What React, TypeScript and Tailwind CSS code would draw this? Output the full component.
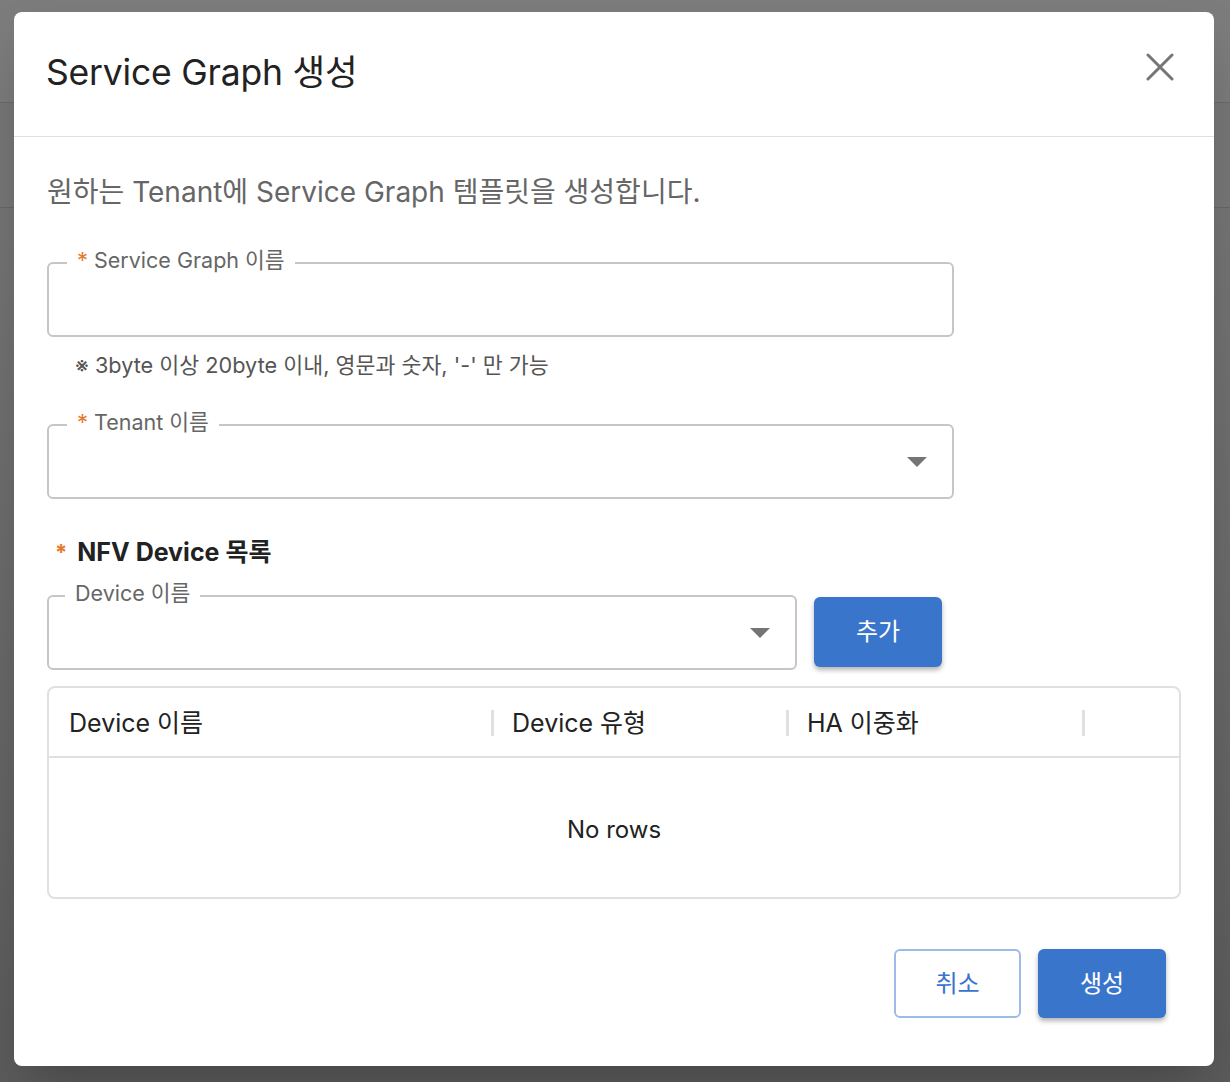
import React from 'react';

const font = { fontFamily: 'Inter, "Noto Sans CJK KR", sans-serif' };

const Caret: React.FC = () => (
    <svg width="20" height="10" viewBox="0 0 20 10" className="shrink-0">
        <path d="M0 0 L20 0 L10 10 Z" fill="#757575" />
    </svg>
);

const OutlinedField: React.FC<{ label: string; required?: boolean; select?: boolean; className?: string }> = ({ label, required, select, className }) => (
    <div className={`relative h-[75px] rounded-[6px] border-2 border-[#c6c6c6] flex items-center justify-end pr-[25px] ${className ?? ''}`}>
        <span className={`absolute -top-[18px] bg-white px-[10px] text-[21.5px] leading-[28px] text-[#666] flex items-center gap-[6px] ${required ? 'left-[18px]' : 'left-[16px]'}`}>
            {required && <span className="text-[#e37a2d] text-[22px]">*</span>}
            {label}
        </span>
        {select && <Caret />}
    </div>
);

export default function App() {
    return (
        <div className="relative w-[1230px] h-[1082px] overflow-hidden" style={font}>
            {/* dimmed page behind the dialog */}
            <div className="flex flex-col h-full bg-gradient-to-b from-[#7b7b7b] via-[#6c6c6c] to-[#5b5b5b]">
                <div className="h-[103px] border-b border-[#6a6a6a] bg-[#7c7c7c]" />
                <div className="h-[105px] border-b border-[#666] bg-[#777]" />
                <div className="flex-1" />
            </div>

            {/* dialog */}
            <div className="absolute top-[12px] left-[14px] w-[1200px] h-[1054px] bg-white rounded-[8px] shadow-2xl flex flex-col">
                <header className="h-[125px] border-b border-[#e0e0e0] flex items-center justify-between pl-[32px] pr-[40px]">
                    <h1 className="text-[35.5px] text-[#222] tracking-[-0.2px] -mt-[2px]">Service Graph 생성</h1>
                    <button className="-mt-[14px] text-[#777]">
                        <svg width="28" height="28" viewBox="0 0 28 28">
                            <path d="M2 2 L26 26 M26 2 L2 26" stroke="#757575" strokeWidth="3" strokeLinecap="round" />
                        </svg>
                    </button>
                </header>

                <div className="flex-1 flex flex-col px-[33px]">
                    <p className="mt-[40px] text-[28px] leading-[30px] text-[#666]">원하는 Tenant에 Service Graph 템플릿을 생성합니다.</p>

                    <OutlinedField label="Service Graph 이름" required className="mt-[55px] w-[907px]" />
                    <p className="mt-[16px] pl-[28px] text-[21.7px] leading-[24px] text-[#555]">※ 3byte 이상 20byte 이내, 영문과 숫자, '-' 만 가능</p>

                    <OutlinedField label="Tenant 이름" required select className="mt-[47px] w-[907px]" />

                    <h2 className="mt-[38px] flex items-center gap-[10px] pl-[8px] text-[25px] leading-[30px] font-bold text-[#222]">
                        <span className="text-[#e37a2d] text-[22px]">*</span>
                        NFV Device 목록
                    </h2>

                    <div className="mt-[28px] flex items-start gap-[17px]">
                        <OutlinedField label="Device 이름" select className="w-[750px] h-[74px]" />
                        <button className="mt-[2px] w-[128px] h-[70px] rounded-[6px] bg-[#3a75cc] text-white text-[24px] shadow-[0_3px_5px_rgba(0,0,0,0.3)]">추가</button>
                    </div>

                    <div className="mt-[16px] h-[213px] w-[1134px] rounded-[8px] border-2 border-[#e0e0e0] flex flex-col overflow-hidden">
                        <div className="h-[70px] pt-[4px] border-b-2 border-[#e0e0e0] flex items-center text-[25px] font-normal text-[#222]">
                            <div className="w-[442px] pl-[20px]">Device 이름</div>
                            <div className="w-[3px] h-[26px] -mt-[2px] bg-[#e0e0e0]" />
                            <div className="w-[292px] pl-[18px]">Device 유형</div>
                            <div className="w-[3px] h-[26px] -mt-[2px] bg-[#e0e0e0]" />
                            <div className="w-[293px] pl-[18px]">HA 이중화</div>
                            <div className="w-[3px] h-[26px] -mt-[2px] bg-[#e0e0e0]" />
                            <div className="flex-1" />
                        </div>
                        <div className="flex-1 pt-[4px] flex items-center justify-center text-[24px] text-[#222]">No rows</div>
                    </div>

                    <div className="mt-[50px] flex justify-end gap-[17px] pr-[15px]">
                        <button className="w-[127px] h-[69px] rounded-[6px] border-2 border-[#9bbbe8] bg-white text-[#3a75cc] text-[24px]">취소</button>
                        <button className="w-[128px] h-[69px] rounded-[6px] bg-[#3a75cc] text-white text-[24px] shadow-[0_3px_5px_rgba(0,0,0,0.3)]">생성</button>
                    </div>
                </div>
            </div>
        </div>
    );
}
